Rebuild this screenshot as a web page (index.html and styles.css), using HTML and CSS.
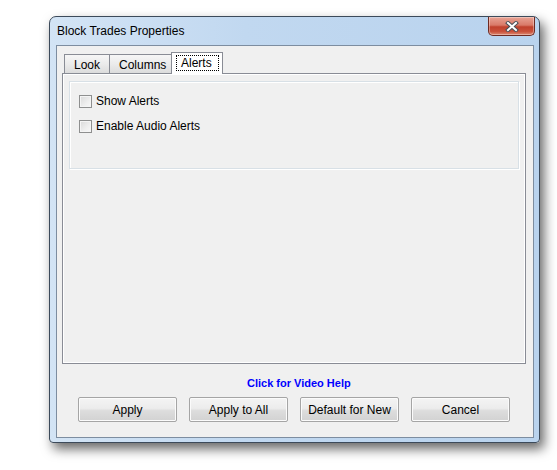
FILE: index.html
```html
<!DOCTYPE html>
<html lang="en">
<head>
  <meta charset="UTF-8">
  <title>Block Trades Properties</title>
  <link rel="stylesheet" href="styles.css">
</head>
<body>
  <div class="window">
    <div class="titlebar">
      <span class="title">Block Trades Properties</span>
      <button class="close" aria-label="Close">
        <svg width="14" height="11" viewBox="0 0 14 11">
          <path d="M3 2 L11 9 M11 2 L3 9" stroke="#4a4f57" stroke-width="4" stroke-linecap="square"/>
          <path d="M3 2 L11 9 M11 2 L3 9" stroke="#fff" stroke-width="2" stroke-linecap="square"/>
        </svg>
      </button>
    </div>
    <div class="client">
      <div class="tabs">
        <div class="tab">Look</div>
        <div class="tab">Columns</div>
        <div class="tab active"><span class="focus">Alerts</span></div>
      </div>
      <div class="panel">
        <div class="group">
          <label class="check"><span class="box"></span>Show Alerts</label>
          <label class="check"><span class="box"></span>Enable Audio Alerts</label>
        </div>
      </div>
      <div class="help"><a href="#">Click for Video Help</a></div>
      <div class="buttons">
        <button class="btn">Apply</button>
        <button class="btn">Apply to All</button>
        <button class="btn">Default for New</button>
        <button class="btn">Cancel</button>
      </div>
    </div>
  </div>
</body>
</html>
```

FILE: styles.css
```css
:root {
  --face: #f0f0f0;
  --tab-border: #898c95;
  --ui-font: 'Liberation Sans', Arial, sans-serif;
}

* {
  box-sizing: border-box;
}

body {
  margin: 0;
  min-height: 470px;
  padding: 16px 0 0 49px;
  background: #fff;
  font-family: var(--ui-font);
  font-size: 12px;
  color: #000;
}

.window {
  width: 491px;
  height: 427px;
  border: 1px solid #3c4a5a;
  border-radius: 7px 7px 4px 4px;
  background: linear-gradient(to right, #d3e4f5 0%, #c1d8f0 40%, #b9d3ee 100%);
  box-shadow: 4px 6px 12px rgba(0, 0, 0, 0.6);
  padding: 0 5px 4px 6px;
  display: flex;
  flex-direction: column;
}

.titlebar {
  height: 28px;
  display: flex;
  align-items: flex-start;
  justify-content: space-between;
}

.title {
  padding: 7px 0 0 1px;
  font-size: 12px;
  color: #000;
}

.close {
  width: 47px;
  height: 19px;
  margin: 0 -1px 0 0;
  padding: 0;
  border: 1px solid #6e2a22;
  border-top: none;
  border-radius: 0 0 5px 5px;
  background: linear-gradient(to bottom, #e8a394 0%, #d97a68 45%, #c0412c 55%, #c9503a 80%, #dc8a73 100%);
  box-shadow: inset 0 0 0 1px rgba(255, 255, 255, 0.35);
  display: flex;
  align-items: center;
  justify-content: center;
}

.close svg {
  display: block;
}

.client {
  flex: 1;
  border: 1px solid #7d8da0;
  background: var(--face);
  padding: 6px 0 0 5px;
  display: flex;
  flex-direction: column;
}

.tabs {
  display: flex;
  align-items: flex-end;
  height: 21px;
  padding-left: 2px;
  position: relative;
  z-index: 1;
}

.tab {
  height: 19px;
  padding: 3px 9px 0;
  border: 1px solid var(--tab-border);
  border-bottom: none;
  margin-right: -1px;
  background: linear-gradient(to bottom, #f6f6f6 0%, #ebebeb 50%, #dcdcdc 100%);
  font-size: 12px;
  line-height: 15px;
}

.tab:nth-child(1) {
  width: 46px;
}

.tab:nth-child(2) {
  width: 63px;
}

.tab.active {
  width: 52px;
  height: 22px;
  margin-bottom: -1px;
  padding: 2px 3px 0 4px;
  background: #fff;
}

.focus {
  display: block;
  border: 1px dotted #000;
  padding: 0 4px;
  line-height: 14px;
}

.panel {
  width: 464px;
  height: 291px;
  border: 1px solid var(--tab-border);
  box-shadow: inset 1px 1px 0 #fff, inset -1px -1px 0 #fff;
  padding: 7px 6px 0 6px;
}

.group {
  height: 88px;
  border: 1px solid #d8e0e6;
  box-shadow: inset 1px 1px 0 #fff, 1px 1px 0 #fff;
  padding: 12px 0 0 9px;
  display: flex;
  flex-direction: column;
  gap: 11px;
}

.check {
  display: flex;
  align-items: center;
  gap: 4px;
  height: 14px;
  font-size: 12px;
}

.box {
  width: 13px;
  height: 13px;
  border: 1px solid #8e8f8f;
  background: linear-gradient(135deg, #d9d9d9 0%, #eeeeee 60%, #f8f8f8 100%);
  box-shadow: inset 0 0 0 1px #f4f4f4;
}

.help {
  margin-top: 12px;
  padding-left: 185px;
  height: 16px;
}

.help a {
  color: #0000ff;
  font-weight: bold;
  font-size: 11px;
  text-decoration: none;
}

.buttons {
  display: flex;
  gap: 12px;
  margin-top: 5px;
  padding-left: 16px;
}

.btn {
  width: 99px;
  height: 25px;
  border: 1px solid #a5a5a5;
  border-radius: 2px;
  background: linear-gradient(to bottom, #f4f4f4 0%, #ececec 45%, #dddddd 55%, #d2d2d2 100%);
  box-shadow: inset 0 0 0 1px #fbfbfb;
  font-family: var(--ui-font);
  font-size: 12px;
  color: #000;
  padding: 0;
}
```
